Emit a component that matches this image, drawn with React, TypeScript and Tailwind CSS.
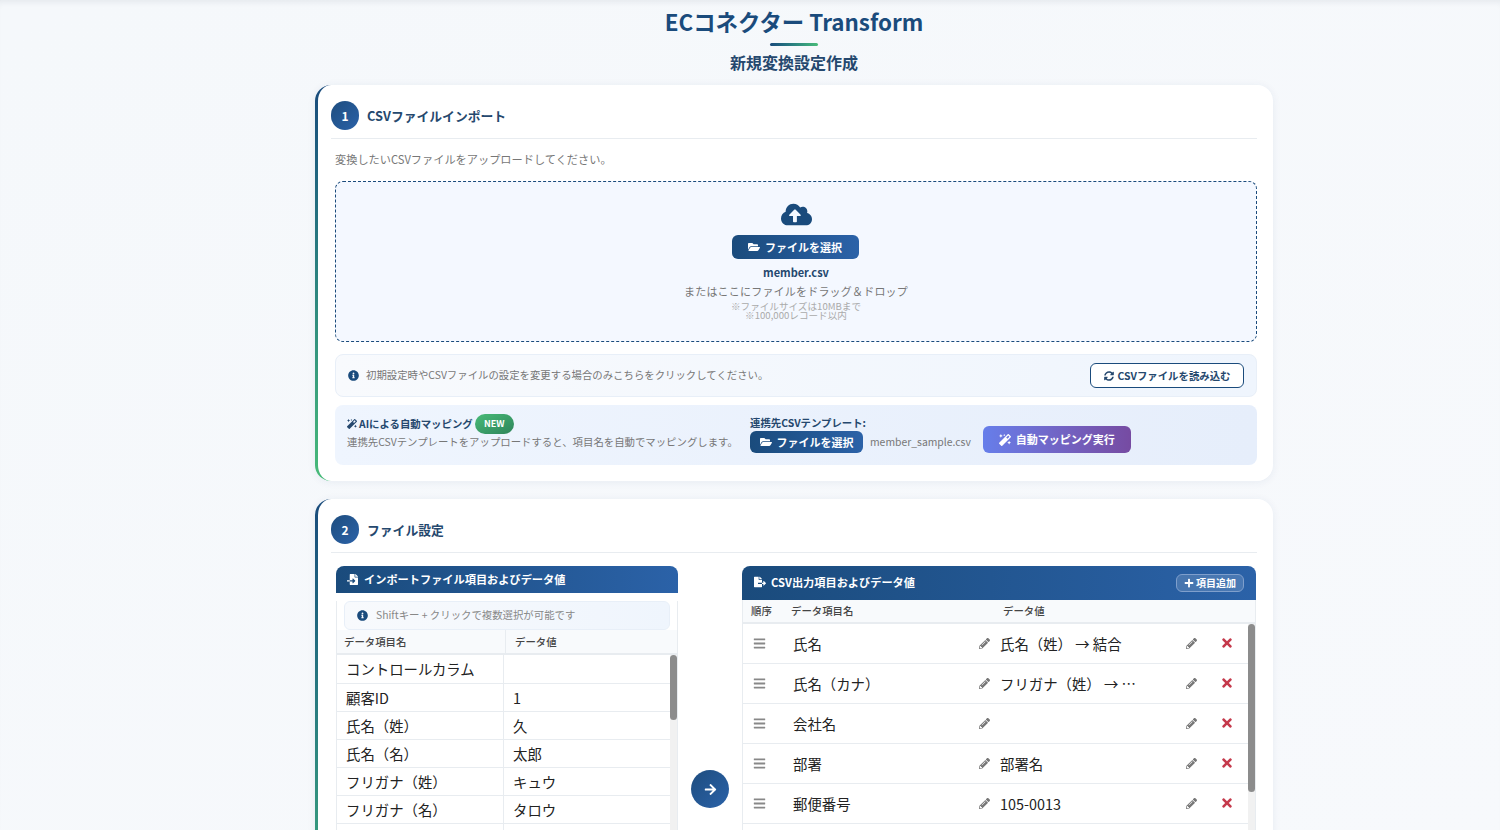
import React from 'react';
import {
    FaArrowRight,
    FaBars,
    FaCloudUploadAlt,
    FaFileExport,
    FaFileImport,
    FaFolderOpen,
    FaInfoCircle,
    FaMagic,
    FaPencilAlt,
    FaPlus,
    FaSyncAlt,
    FaTimes,
} from 'react-icons/fa';

const importRows = [
    ['コントロールカラム', ''],
    ['顧客ID', '1'],
    ['氏名（姓）', '久'],
    ['氏名（名）', '太郎'],
    ['フリガナ（姓）', 'キュウ'],
    ['フリガナ（名）', 'タロウ'],
    ['', ''],
];

const exportRows = [
    {name: '氏名', value: '氏名（姓） → 結合'},
    {name: '氏名（カナ）', value: 'フリガナ（姓） → ⋯'},
    {name: '会社名', value: ''},
    {name: '部署', value: '部署名'},
    {name: '郵便番号', value: '105-0013'},
    {name: '', value: ''},
];

const Step: React.FC<{ n: number; title: string; children: React.ReactNode }> = ({n, title, children}) => (
    <section className="rounded-2xl bg-gradient-to-b from-[#1a4b7c] to-[#48bb78] bg-[length:20px_100%] bg-no-repeat pl-[3px] shadow-[0_1px_8px_rgba(30,60,110,0.07)]">
        <div className="rounded-tl-[13px_16px] rounded-r-2xl rounded-bl-[13px_16px] bg-white pt-4 pr-4 pb-4 pl-[13px]">
            <div className="flex h-[38px] items-center gap-2 border-b border-[#e8ecf0] pb-2">
                <div className="flex h-[29px] w-[28px] items-center justify-center rounded-full bg-gradient-to-br from-[#1e4d7f] to-[#2b62a8] text-[12px] font-bold text-white">{n}</div>
                <h2 className="text-[12.8px] font-bold text-[#25486e]">{title}</h2>
            </div>
            {children}
        </div>
    </section>
);

const FileButton: React.FC<{ className: string }> = ({className}) => (
    <button className={`flex items-center justify-center gap-[5px] rounded-md bg-gradient-to-r from-[#1a4b7c] to-[#2b62a8] text-[11px] font-bold text-white ${className}`}>
        <FaFolderOpen className="text-[12px]"/>
        ファイルを選択
    </button>
);

const App: React.FC = () => {
    return (
        <div className="h-[830px] overflow-hidden bg-gradient-to-br from-[#f5f8fb] to-[#f7f9fc] font-['Noto_Sans_CJK_JP','Noto_Sans',sans-serif] shadow-[inset_0_6px_6px_-4px_rgba(30,40,60,0.08)]">
            <div className="ml-[315px] w-[958px]">
                <header className="flex h-[85px] flex-col items-center pt-[5px]">
                    <h1 className="text-[22.4px] leading-[32px] font-bold text-[#1a4b7c]">ECコネクター Transform</h1>
                    <div className="mt-[6px] h-[3px] w-[48px] rounded-sm bg-gradient-to-r from-[#1a4b7c] to-[#48bb78]"/>
                    <h2 className="mt-[4px] text-[16px] leading-[24px] font-bold text-[#25486e]">新規変換設定作成</h2>
                </header>

                <Step n={1} title="CSVファイルインポート">
                    <p className="mt-[11px] pl-[4px] text-[11.2px] leading-[18px] text-[#777]">変換したいCSVファイルをアップロードしてください。</p>
                    <div className="mt-[13px] ml-[4px] flex h-[161px] flex-col items-center rounded-lg border border-dashed border-[#1a4b7c] bg-[#f4f8ff] pt-[17px]">
                        <FaCloudUploadAlt className="text-[31px] text-[#1a4b7c]"/>
                        <FileButton className="mt-[5px] mr-[2px] h-[24px] w-[127px]"/>
                        <div className="mt-[5px] text-[11px] leading-[16px] font-semibold text-[#25486e]">member.csv</div>
                        <div className="mt-[3px] text-[11px] leading-[16px] tracking-[0.2px] text-[#777]">またはここにファイルをドラッグ＆ドロップ</div>
                        <div className="mt-[3px] text-center text-[9.6px] leading-[9px] text-[#aaa]">
                            ※ファイルサイズは10MBまで<br/>※100,000レコード以内
                        </div>
                    </div>
                    <div className="mt-[12px] ml-[4px] flex h-[43px] items-center justify-between rounded-lg border border-[#e8eff8] bg-gradient-to-r from-[#f8fafd] to-[#eff5fd] px-[12px]">
                        <div className="flex items-center gap-[7px] pb-[2px] text-[10.4px] text-[#777]">
                            <FaInfoCircle className="mt-[2px] text-[11px] text-[#1a4b7c]"/>
                            初期設定時やCSVファイルの設定を変更する場合のみこちらをクリックしてください。
                        </div>
                        <button className="flex h-[25px] w-[154px] items-center justify-center gap-[4px] rounded-md border border-[#1a4b7c] bg-white text-[10.4px] font-semibold text-[#25486e]">
                            <FaSyncAlt className="text-[10px]"/>
                            CSVファイルを読み込む
                        </button>
                    </div>
                    <div className="mt-[8px] ml-[4px] flex h-[60px] items-center rounded-lg bg-gradient-to-r from-[#eff5fe] to-[#e6eefb] pl-[12px]">
                        <div className="mb-[8px] w-[403px]">
                            <div className="flex items-center pt-[1px] text-[10.4px] font-semibold text-[#25486e]">
                                <FaMagic className="mr-[2px] text-[10px]"/>
                                AIによる自動マッピング
                                <span className="ml-[2px] flex h-[20px] w-[39px] items-center justify-center rounded-full bg-gradient-to-br from-[#48bb78] to-[#2f855a] text-[9px] font-bold text-white">NEW</span>
                            </div>
                            <div className="text-[10.4px] leading-[15px] text-[#777]">連携先CSVテンプレートをアップロードすると、項目名を自動でマッピングします。</div>
                        </div>
                        <div className="mb-[2px]">
                            <div className="text-[10.4px] leading-[15px] font-semibold text-[#25486e]">連携先CSVテンプレート:</div>
                            <div className="mt-[1px] flex items-center">
                                <FileButton className="h-[22px] w-[113px]"/>
                                <span className="ml-[7px] text-[10.4px] text-[#777]">member_sample.csv</span>
                            </div>
                        </div>
                        <button className="mt-[9px] ml-[12px] flex h-[27px] w-[148px] items-center justify-center gap-[5px] rounded-md bg-gradient-to-r from-[#667eea] to-[#764ba2] text-[11px] font-bold text-white">
                            <FaMagic className="text-[12px]"/>
                            自動マッピング実行
                        </button>
                    </div>
                </Step>

                <div className="mt-[18px]">
                    <Step n={2} title="ファイル設定">
                        <div className="mt-[13px] ml-[5px] flex items-start">
                            <div className="h-[400px] w-[342px] shrink-0 overflow-hidden rounded-t-lg">
                                <div className="flex h-[27px] items-center gap-[6px] bg-gradient-to-r from-[#1a4b7c] to-[#2b62a8] pl-[11px] text-[11.2px] font-bold text-white">
                                    <FaFileImport className="text-[11px]"/>
                                    インポートファイル項目およびデータ値
                                </div>
                                <div className="h-full border-x border-[#e8ecf0]">
                                    <div className="mx-[7px] mt-[8px] flex h-[29px] items-center gap-[8px] rounded-md border border-[#e8eff8] bg-gradient-to-r from-[#f8fafd] to-[#eff5fd] pb-[2px] pl-[12px] text-[10.4px] text-[#888]">
                                        <FaInfoCircle className="mt-[2px] text-[11px] text-[#1a4b7c]"/>
                                        Shiftキー + クリックで複数選択が可能です
                                    </div>
                                    <div className="flex h-[25px] items-center border-b-2 border-[#e8ecf0] bg-[#f8fafc] text-[10.4px] font-medium text-[#444]">
                                        <div className="flex h-full w-[169px] items-center border-r border-[#e8ecf0] pl-[7px]">データ項目名</div>
                                        <div className="pl-[9px]">データ値</div>
                                    </div>
                                    <div className="flex">
                                        <div className="min-w-0 flex-1">
                                            {importRows.map((row, index) => (
                                                <div key={index} className={`flex items-center border-b border-[#e8ecf0] text-[14.4px] text-[#222] ${index === 0 ? 'h-[29px]' : 'h-[28px]'}`}>
                                                    <div className="flex h-full w-[167px] items-center border-r border-[#e8ecf0] pl-[9px]">{row[0]}</div>
                                                    <div className="pl-[9px]">{row[1]}</div>
                                                </div>
                                            ))}
                                        </div>
                                        <div className="w-[7px] shrink-0 bg-[#f1f1f1]">
                                            <div className="h-[65px] rounded-full bg-[#8c8c8c]"/>
                                        </div>
                                    </div>
                                </div>
                            </div>

                            <div className="flex h-[400px] w-[64px] shrink-0 justify-center pt-[204px]">
                                <div className="flex h-[38px] w-[38px] items-center justify-center rounded-full bg-gradient-to-br from-[#1e4d7f] to-[#2b62a8] text-[13px] text-white">
                                    <FaArrowRight/>
                                </div>
                            </div>

                            <div className="h-[400px] w-[514px] shrink-0 overflow-hidden rounded-t-lg">
                                <div className="flex h-[34px] items-center justify-between bg-gradient-to-r from-[#1a4b7c] to-[#2b62a8] pr-[12px] pb-[1px] pl-[12px] text-[11.2px] font-bold text-white">
                                    <div className="flex items-center gap-[5px]">
                                        <FaFileExport className="text-[12px]"/>
                                        CSV出力項目およびデータ値
                                    </div>
                                    <button className="flex h-[18px] w-[68px] items-center justify-center gap-[2px] rounded-md border border-[#7f9fcc] bg-white/15 text-[10px] font-semibold">
                                        <FaPlus className="text-[10px]"/>
                                        項目追加
                                    </button>
                                </div>
                                <div className="h-full border-x border-[#e8ecf0]">
                                    <div className="flex h-[24px] items-center border-b-2 border-[#e8ecf0] bg-[#f8fafc] pb-[1px] text-[10.4px] font-medium text-[#444]">
                                        <div className="w-[48px] pl-[8px]">順序</div>
                                        <div className="w-[212px]">データ項目名</div>
                                        <div>データ値</div>
                                    </div>
                                    <div className="flex">
                                        <div className="min-w-0 flex-1">
                                            {exportRows.map((row, index) => (
                                                <div key={index} className="flex h-[40px] items-center border-b border-[#e8ecf0] text-[14.4px] text-[#222]">
                                                    {row.name && (
                                                        <>
                                                            <div className="mb-[1px] w-[50px] pl-[10px] text-[13px] text-[#888]"><FaBars/></div>
                                                            <div className="w-[186px]">{row.name}</div>
                                                            <FaPencilAlt className="w-[11px] text-[11px] text-[#777]"/>
                                                            <div className="w-[196px] truncate pl-[10px]">{row.value}</div>
                                                            <FaPencilAlt className="w-[11px] text-[11px] text-[#777]"/>
                                                            <FaTimes className="mb-[2px] ml-[23px] text-[14px] text-[#c53a4c]"/>
                                                        </>
                                                    )}
                                                </div>
                                            ))}
                                        </div>
                                        <div className="w-[7px] shrink-0 bg-[#f1f1f1]">
                                            <div className="h-[168px] rounded-full bg-[#8c8c8c]"/>
                                        </div>
                                    </div>
                                </div>
                            </div>
                        </div>
                    </Step>
                </div>
            </div>
        </div>
    );
};

export default App;
